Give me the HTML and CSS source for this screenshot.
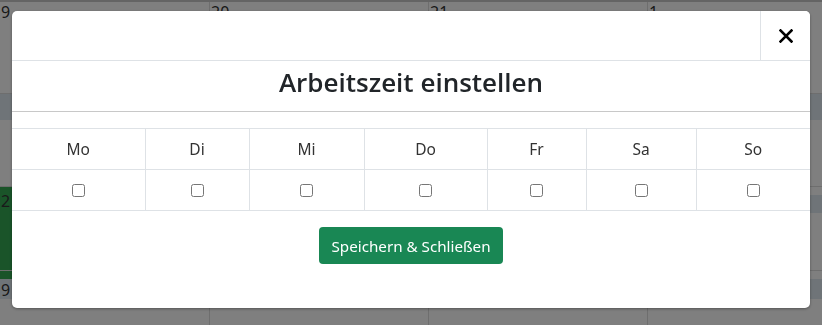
FILE: index.html
```html
<!DOCTYPE html>
<html lang="de">
<head>
<meta charset="utf-8">
<title>Arbeitszeit einstellen</title>
<link rel="stylesheet" href="styles.css">
</head>
<body>
<div class="calendar">
  <div class="week week-1">
    <div class="day"><div class="day-head">9</div></div>
    <div class="day"><div class="day-head">20</div></div>
    <div class="day"><div class="day-head">21</div></div>
    <div class="day"><div class="day-head">1</div></div>
  </div>
  <div class="week week-2">
    <div class="day"><div class="day-head band"></div></div>
    <div class="day"><div class="day-head band"></div></div>
    <div class="day"><div class="day-head band"></div></div>
    <div class="day"><div class="day-head band"></div></div>
  </div>
  <div class="week week-3">
    <div class="day event"><div class="day-head">2</div></div>
    <div class="day"><div class="day-head band"></div></div>
    <div class="day"><div class="day-head band"></div></div>
    <div class="day"><div class="day-head band shift"></div></div>
  </div>
  <div class="week week-4">
    <div class="day event-tail"><div class="day-head band">9</div></div>
    <div class="day"><div class="day-head band"></div></div>
    <div class="day"><div class="day-head band"></div></div>
    <div class="day"><div class="day-head band shift"></div></div>
  </div>
</div>

<div class="overlay">
  <div class="modal">
    <div class="modal-top">
      <button class="close-btn" type="button" aria-label="Schließen">
        <svg width="14" height="14" viewBox="0 0 14 14" aria-hidden="true">
          <path d="M1.5 1.5 L12.5 12.5 M12.5 1.5 L1.5 12.5" stroke="#000" stroke-width="2.6" stroke-linecap="square" fill="none"/>
        </svg>
      </button>
    </div>
    <div class="modal-title-bar">
      <h4 class="modal-title">Arbeitszeit einstellen</h4>
    </div>
    <div class="modal-body">
      <table class="days-table">
        <colgroup>
          <col class="c-mo"><col class="c-di"><col class="c-mi"><col class="c-do"><col class="c-fr"><col class="c-sa"><col class="c-so">
        </colgroup>
        <thead>
          <tr><th>Mo</th><th>Di</th><th>Mi</th><th>Do</th><th>Fr</th><th>Sa</th><th>So</th></tr>
        </thead>
        <tbody>
          <tr>
            <td><input type="checkbox"></td>
            <td><input type="checkbox"></td>
            <td><input type="checkbox"></td>
            <td><input type="checkbox"></td>
            <td><input type="checkbox"></td>
            <td><input type="checkbox"></td>
            <td><input type="checkbox"></td>
          </tr>
        </tbody>
      </table>
      <div class="actions">
        <button class="btn-save" type="button">Speichern &amp; Schließen</button>
      </div>
    </div>
  </div>
</div>
</body>
</html>
```

FILE: styles.css
```css
* { box-sizing: border-box; }

html, body {
  margin: 0;
  padding: 0;
  width: 822px;
  height: 325px;
  overflow: hidden;
  background: #fff;
  font-family: "Noto Sans", "Open Sans", sans-serif;
}

/* background calendar */
.calendar {
  width: 822px;
  border-top: 2px solid #c8c8c8;
}
.week {
  display: grid;
  grid-template-columns: 210px 219px 219px 174px;
  border-bottom: 1px solid #dcdcdc;
}
.week-1 { height: 92px; }
.week-2 { height: 93px; }
.week-3 { height: 84px; }
.week-4 { height: 60px; }
.day {
  border-right: 1px solid #dcdcdc;
}
.day:last-child { border-right: 0; }
.day-head {
  height: 26px;
  font-size: 16px;
  line-height: 24px;
  color: #333;
  padding-left: 1px;
}
.week-1 .day-head { height: 20px; line-height: 20px; }
.band { background: #dfe9f0; }
.week-3 .shift, .week-4 .shift { margin-top: 8px; height: 18px; }
.week-4 .day-head { margin-top: 8px; height: 20px; line-height: 22px; }
.event { background: #34a853; }
.event .day-head { line-height: 26px; padding-top: 1px; }
.event-tail { background: linear-gradient(#34a853 0 8px, transparent 8px); }

/* overlay + modal */
.overlay {
  position: fixed;
  inset: 0;
  background: rgba(0, 0, 0, 0.5);
  padding: 11px 12px 0 12px;
}
.modal {
  width: 798px;
  height: 297px;
  background: #fff;
  border-radius: 5px;
  box-shadow: 0 1px 3px rgba(0,0,0,.35);
  display: flex;
  flex-direction: column;
  overflow: hidden;
}
.modal-top {
  height: 50px;
  display: flex;
  justify-content: flex-end;
  border-bottom: 1px solid #dee2e6;
}
.close-btn {
  width: 50px;
  height: 49px;
  border: 0;
  border-left: 1px solid #dee2e6;
  background: #fff;
  padding: 0;
  display: flex;
  align-items: center;
  justify-content: center;
}
.modal-title-bar {
  height: 51px;
  padding-bottom: 7px;
  border-bottom: 1px solid #c8c8c8;
  display: flex;
  align-items: center;
  justify-content: center;
}
.modal-title {
  margin: 0;
  font-family: "Open Sans", "Noto Sans", sans-serif;
  font-size: 26px;
  font-weight: 600;
  color: #212529;
  line-height: 1.2;
}
.modal-body {
  padding-top: 16px;
}
.days-table {
  width: 100%;
  border-collapse: collapse;
  table-layout: fixed;
  color: #333;
}
.c-mo { width: 133px; }
.c-di { width: 104px; }
.c-mi { width: 115px; }
.c-do { width: 123px; }
.c-fr { width: 99px; }
.c-sa { width: 110px; }
.c-so { width: 114px; }
.days-table th,
.days-table td {
  text-align: center;
  border: 1px solid #dee2e6;
  height: 41px;
  padding: 0;
  font-weight: 400;
  font-size: 15.5px;
  vertical-align: middle;
}
.days-table tr > :first-child { border-left: 0; }
.days-table tr > :last-child { border-right: 0; }
.days-table input {
  margin: 0 0 2px;
  width: 13px;
  height: 13px;
  vertical-align: middle;
}
.actions {
  display: flex;
  justify-content: center;
  padding-top: 16px;
}
.btn-save {
  height: 37px;
  width: 184px;
  padding: 0 8px;
  border: 0;
  border-radius: 4px;
  background: #198754;
  color: #fff;
  font-family: "Noto Sans", "Open Sans", sans-serif;
  font-size: 15.2px;
}
```
